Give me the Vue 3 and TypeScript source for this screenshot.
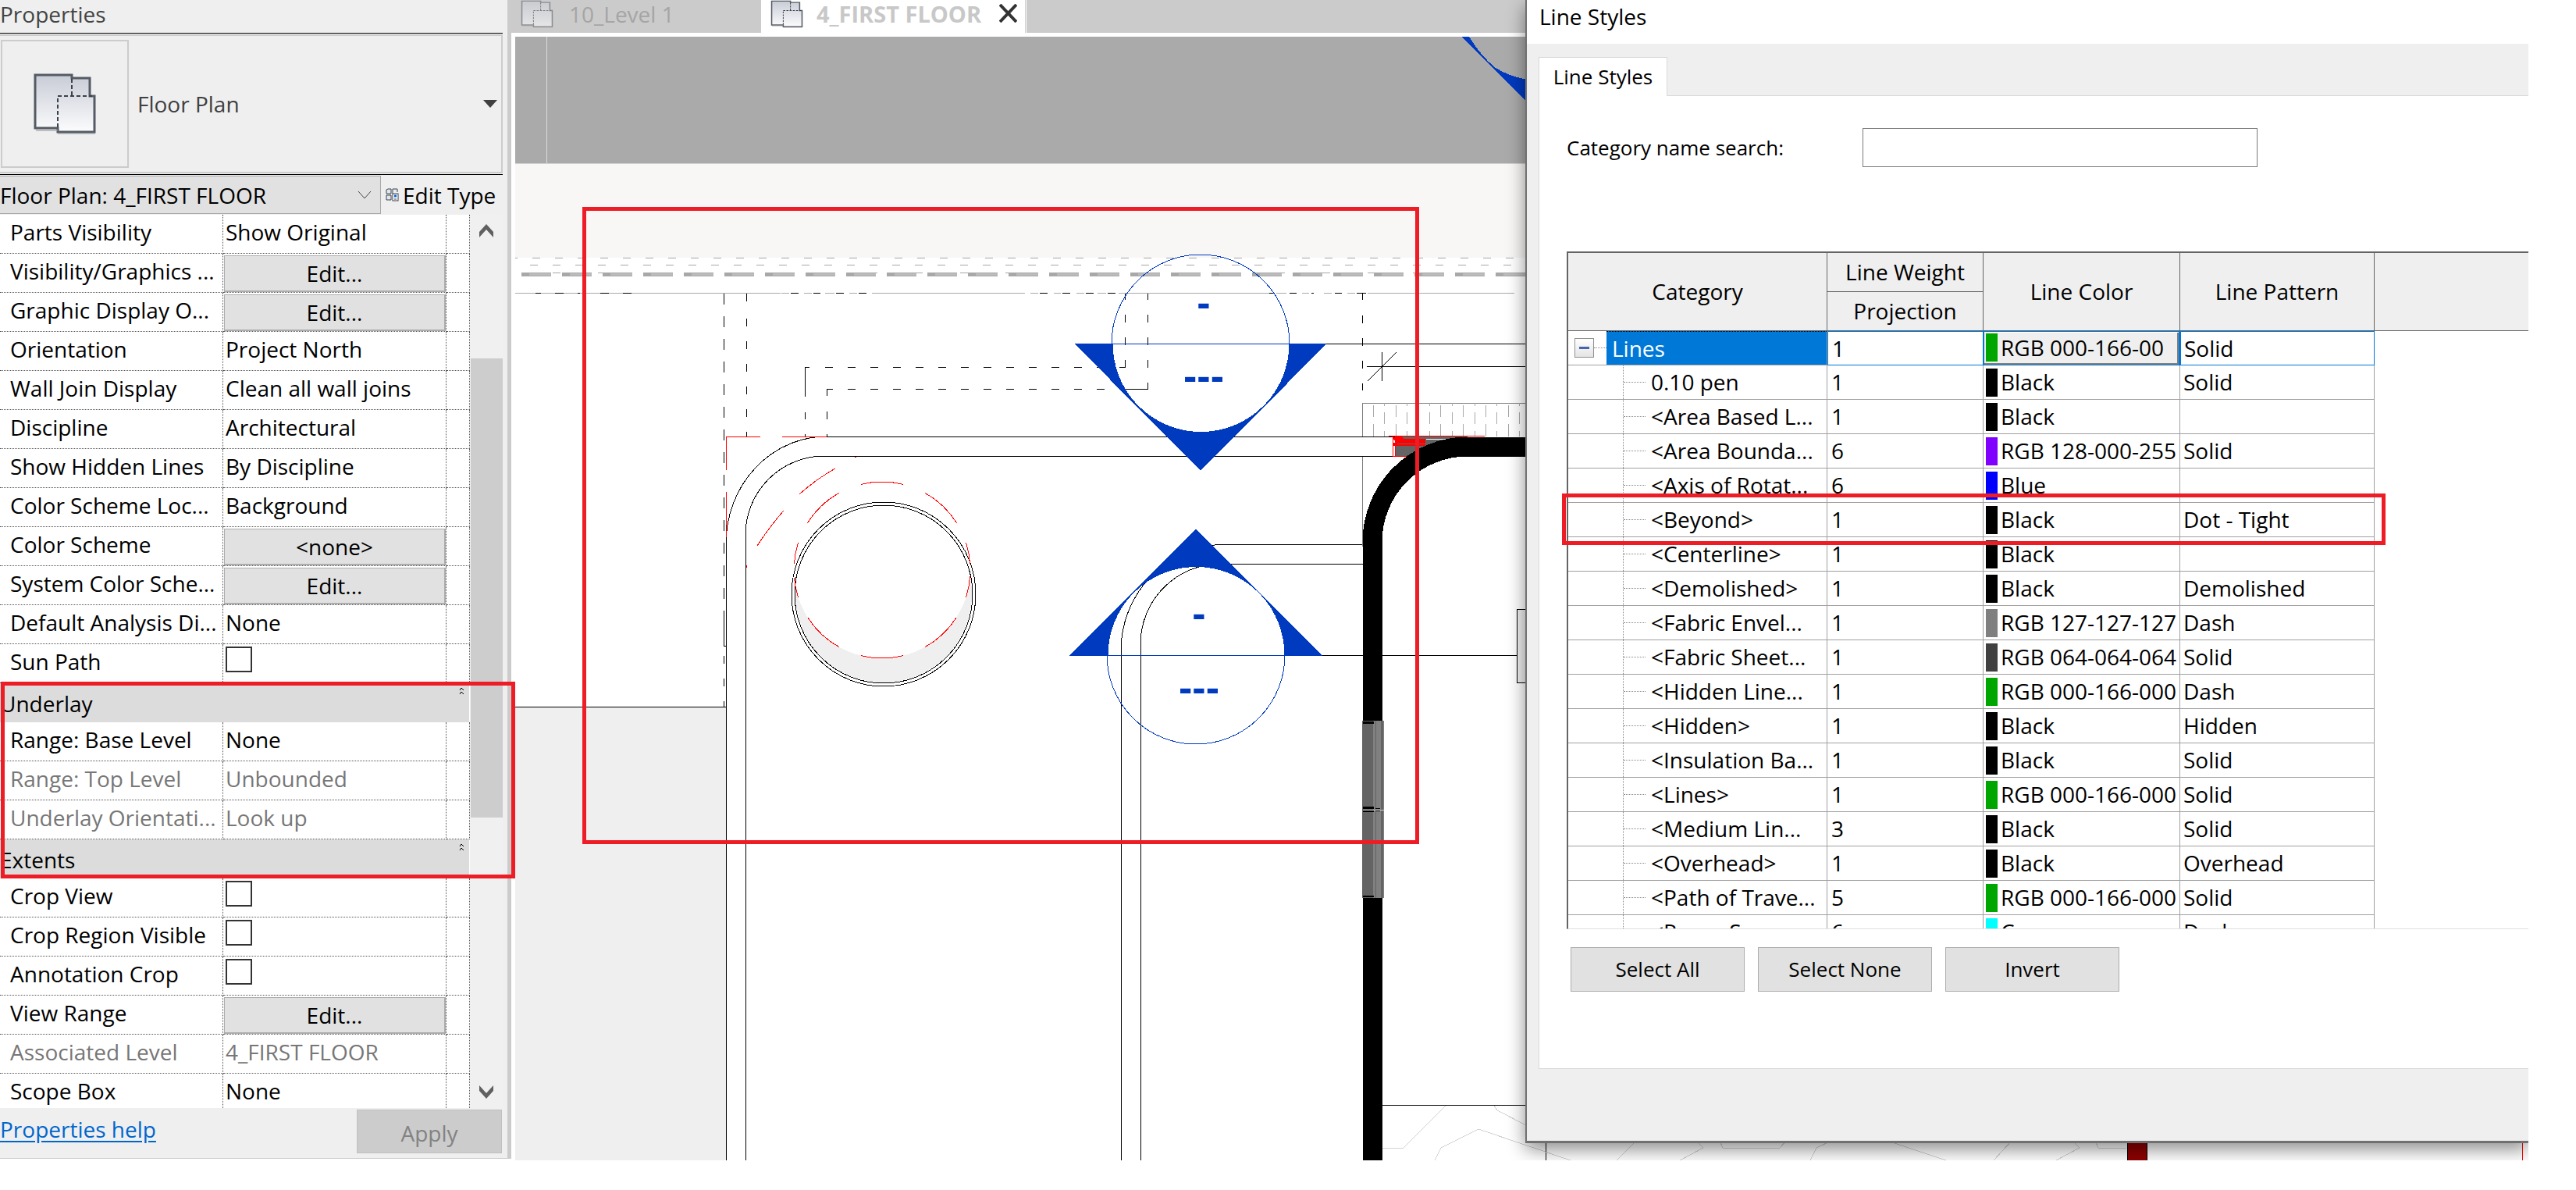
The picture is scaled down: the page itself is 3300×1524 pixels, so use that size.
<script setup lang="ts">
import { ref } from 'vue'

type Kind = 'text' | 'button' | 'check' | 'group'
interface Prop { label: string; kind: Kind; value?: string; muted?: boolean }

const props: Prop[] = [
  { label: 'Parts Visibility', kind: 'text', value: 'Show Original' },
  { label: 'Visibility/Graphics ...', kind: 'button', value: 'Edit...' },
  { label: 'Graphic Display O...', kind: 'button', value: 'Edit...' },
  { label: 'Orientation', kind: 'text', value: 'Project North' },
  { label: 'Wall Join Display', kind: 'text', value: 'Clean all wall joins' },
  { label: 'Discipline', kind: 'text', value: 'Architectural' },
  { label: 'Show Hidden Lines', kind: 'text', value: 'By Discipline' },
  { label: 'Color Scheme Loc...', kind: 'text', value: 'Background' },
  { label: 'Color Scheme', kind: 'button', value: '<none>' },
  { label: 'System Color Sche...', kind: 'button', value: 'Edit...' },
  { label: 'Default Analysis Di...', kind: 'text', value: 'None' },
  { label: 'Sun Path', kind: 'check' },
  { label: 'Underlay', kind: 'group' },
  { label: 'Range: Base Level', kind: 'text', value: 'None' },
  { label: 'Range: Top Level', kind: 'text', value: 'Unbounded', muted: true },
  { label: 'Underlay Orientati...', kind: 'text', value: 'Look up', muted: true },
  { label: 'Extents', kind: 'group' },
  { label: 'Crop View', kind: 'check' },
  { label: 'Crop Region Visible', kind: 'check' },
  { label: 'Annotation Crop', kind: 'check' },
  { label: 'View Range', kind: 'button', value: 'Edit...' },
  { label: 'Associated Level', kind: 'text', value: '4_FIRST FLOOR', muted: true },
  { label: 'Scope Box', kind: 'text', value: 'None' },
]

interface LineStyle { name: string; weight: number; hex: string; color: string; pattern: string }
const green = '#00a600'
const styles: LineStyle[] = [
  { name: '0.10 pen', weight: 1, hex: '#000', color: 'Black', pattern: 'Solid' },
  { name: '<Area Based L...', weight: 1, hex: '#000', color: 'Black', pattern: '' },
  { name: '<Area Bounda...', weight: 6, hex: '#8000ff', color: 'RGB 128-000-255', pattern: 'Solid' },
  { name: '<Axis of Rotat...', weight: 6, hex: '#0000ff', color: 'Blue', pattern: '' },
  { name: '<Beyond>', weight: 1, hex: '#000', color: 'Black', pattern: 'Dot - Tight' },
  { name: '<Centerline>', weight: 1, hex: '#000', color: 'Black', pattern: '' },
  { name: '<Demolished>', weight: 1, hex: '#000', color: 'Black', pattern: 'Demolished' },
  { name: '<Fabric Envel...', weight: 1, hex: '#7f7f7f', color: 'RGB 127-127-127', pattern: 'Dash' },
  { name: '<Fabric Sheet...', weight: 1, hex: '#404040', color: 'RGB 064-064-064', pattern: 'Solid' },
  { name: '<Hidden Line...', weight: 1, hex: green, color: 'RGB 000-166-000', pattern: 'Dash' },
  { name: '<Hidden>', weight: 1, hex: '#000', color: 'Black', pattern: 'Hidden' },
  { name: '<Insulation Ba...', weight: 1, hex: '#000', color: 'Black', pattern: 'Solid' },
  { name: '<Lines>', weight: 1, hex: green, color: 'RGB 000-166-000', pattern: 'Solid' },
  { name: '<Medium Lin...', weight: 3, hex: '#000', color: 'Black', pattern: 'Solid' },
  { name: '<Overhead>', weight: 1, hex: '#000', color: 'Black', pattern: 'Overhead' },
  { name: '<Path of Trave...', weight: 5, hex: green, color: 'RGB 000-166-000', pattern: 'Solid' },
  { name: '<Room Sepa...', weight: 6, hex: '#00ffff', color: 'Cyan', pattern: 'Dash' },
]

const search = ref('')
const view = ref('Floor Plan: 4_FIRST FLOOR')

// Horizontal runs of the roof edge, as [start, end] pairs.
const edgeGrey = [[660, 1000], [1001, 1011], [1030, 1040], [1057, 1069], [1088, 1098], [1117, 1313], [1320, 1330], [1350, 1359], [1379, 1389], [1406, 1417], [1433, 1626], [1635, 1648], [1668, 1677], [1696, 1706], [1726, 1736], [1752, 1940]]
const edgeBlack = [[686, 693], [711, 722], [740, 743], [769, 780], [798, 809], [1013, 1023], [1042, 1051], [1071, 1081], [1100, 1110], [1332, 1342], [1361, 1371], [1391, 1401], [1419, 1429], [1626, 1632], [1652, 1661], [1680, 1683], [1710, 1719], [1738, 1750]]
const runs = (pairs: number[][], y: number) => pairs.map(([a, b]) => `M${a} ${y}H${b}`).join('')

// Arc of the hidden circle between two bearings, measured clockwise from north.
const arc = (cx: number, cy: number, r: number, from: number, to: number) => {
  const at = (deg: number) => {
    const t = (deg * Math.PI) / 180
    return `${(cx + r * Math.sin(t)).toFixed(1)} ${(cy - r * Math.cos(t)).toFixed(1)}`
  }
  return `M${at(from)}A${r} ${r} 0 0 1 ${at(to)}`
}
const hiddenArcs = [[-14, 14], [29, 58], [72, 86], [94, 108], [123, 151], [166, 194], [209, 237], [252, 265], [274, 288], [302, 331]]
  .map(([a, b]) => arc(1130, 730, 113, a, b)).join('')

const paverXs = Array.from({ length: 15 }, (_, i) => 1759 + Math.round(i * 14.4))
const pavers = paverXs.map((x, i) => i % 2 === 0 ? `M${x} 519V534M${x} 543V559` : `M${x} 516V520M${x} 528V543M${x} 552V559`).join('')

const contours = 'M1771 1470H1798L1852 1416M1914 1416L1918 1422L1955 1441M1838 1486L1846 1470L1894 1446L2012 1486M2096 1461L2071 1486M2173 1461L2182 1470L2152 1486M2203 1461L2207 1470H2280L2288 1461M2346 1461L2327 1470L2319 1486M2418 1461L2493 1486M2577 1461L2554 1486M2655 1461L2664 1470L2634 1486M2684 1461L2688 1470H2724'
</script>

<template>
  <div class="shell">
    <svg class="defs" aria-hidden="true">
      <defs>
        <linearGradient id="sheet" x1="0" y1="0" x2="0" y2="1">
          <stop offset="0" stop-color="#c8ccd6" /><stop offset="1" stop-color="#fcfcfd" />
        </linearGradient>
        <symbol id="plan" viewBox="0 0 82 80" preserveAspectRatio="none">
          <path d="M3 3H50V7H73V30H79V76H32V71H3Z" fill="url(#sheet)" stroke="#555b64" stroke-width="3" />
          <path d="M4 74H32M32 78H80" stroke="#9a9da2" stroke-width="2" opacity=".6" />
          <path d="M50 8V30M32 70V30H76" fill="none" stroke="#3c424c" stroke-width="2" stroke-dasharray="5 3" />
        </symbol>
      </defs>
    </svg>

    <aside class="panel">
      <h2 class="panel-title">Properties</h2>
      <div class="type-row">
        <button class="type" type="button">
          <span class="thumb-box"><svg width="82" height="80"><use href="#plan" /></svg></span>
          <span class="type-name">Floor Plan</span>
          <svg class="caret" width="18" height="10"><path d="M0 0H18L9 10Z" fill="#404040" /></svg>
        </button>
      </div>
      <div class="view-row">
        <div class="view-pick">
          <select v-model="view" aria-label="View"><option>Floor Plan: 4_FIRST FLOOR</option></select>
          <svg class="pick-arrow" width="18" height="11"><path d="M1 1L9 10L17 1" fill="none" stroke="#444" /></svg>
        </div>
        <button class="edit-type" type="button">
          <svg width="17" height="17" viewBox="0 0 17 17">
            <path d="M1 2L3 1H7V7H1ZM9 1H15V5M9 1V7M1 9H7V15H1Z" fill="#e4e8ee" stroke="#39424e" />
            <rect x="9" y="7" width="7" height="9" fill="#fff" stroke="#39424e" />
            <path d="M11 10H14" stroke="#0a62c8" stroke-width="3" /><path d="M11 14H14" stroke="#39424e" />
          </svg>
          <span>Edit Type</span>
        </button>
      </div>
      <div class="grid-area">
        <table class="grid">
          <colgroup><col class="c-label"><col class="c-value"><col class="c-end"></colgroup>
          <tbody>
            <tr v-for="(p, i) in props" :key="p.label" :class="{ muted: p.muted, group: p.kind === 'group' }">
              <template v-if="p.kind === 'group'">
                <th colspan="3" scope="rowgroup">
                  <div class="group-head">
                    <span>{{ p.label }}</span>
                    <button type="button" :aria-label="'Collapse ' + p.label">
                      <svg width="7" height="10"><path d="M1 4L3 1L6 4M1 9L3 6L6 9" fill="none" stroke="#000" /></svg>
                    </button>
                  </div>
                </th>
              </template>
              <template v-else>
                <th scope="row"><label :for="p.kind === 'check' ? 'p' + i : undefined">{{ p.label }}</label></th>
                <td :class="p.kind">
                  <button v-if="p.kind === 'button'" type="button" class="cell-btn" :aria-label="p.label + ' ' + p.value">{{ p.value }}</button>
                  <input v-else-if="p.kind === 'check'" :id="'p' + i" type="checkbox" class="box">
                  <template v-else>{{ p.value }}</template>
                </td>
                <td></td>
              </template>
            </tr>
          </tbody>
        </table>
        <div class="scroll">
          <svg width="18" height="17"><path d="M0 10L9 0L18 10V17L9 7L0 17Z" fill="#606060" /></svg>
          <div class="thumb"></div>
          <svg width="18" height="17"><path d="M0 7L9 17L18 7V0L9 10L0 0Z" fill="#606060" /></svg>
        </div>
      </div>
      <div class="panel-foot">
        <a href="#help">Properties help</a>
        <button type="button" disabled>Apply</button>
      </div>
    </aside>

    <main class="work">
      <nav class="tabs">
        <button class="tab" type="button">
          <svg width="42" height="36"><use href="#plan" /></svg><span>10_Level 1</span>
        </button>
        <div class="tab active">
          <button class="tab-name" type="button"><svg width="42" height="36"><use href="#plan" /></svg><span>4_FIRST FLOOR</span></button>
          <button class="close" type="button" aria-label="Close view">
            <svg width="23" height="24"><path d="M1 1L22 23M22 1L1 23" stroke="#333" stroke-width="4" /></svg>
          </button>
        </div>
      </nav>
      <div class="canvas">
        <svg class="drawing" role="img" aria-label="First floor plan">
          <g transform="translate(-660 -47)" shape-rendering="crispEdges" fill="none" stroke="#000">
            <g stroke="none">
              <rect x="660" y="47" width="2640" height="162" fill="#aaa" />
              <rect x="660" y="209" width="2640" height="1" fill="#d2d2d0" />
              <rect x="660" y="210" width="2640" height="120" fill="#f8f7f5" />
              <rect x="660" y="905" width="270" height="600" fill="#efefef" />
              <rect x="700" y="47" width="1" height="162" fill="#dcdcdc" />
            </g>
            <path d="M1872 47L1956 130V102Q1932 97 1916 87Q1898 73 1882 47Z" fill="#003abf" stroke="none" />

            <g stroke="#a8a8a8">
              <path d="M653 330H1955" stroke-dasharray="10 19" />
              <path d="M679 339H1955" stroke-dasharray="10 19" />
              <path d="M708 349H1955" stroke-dasharray="10 48" />
              <path d="M668 351H1955" stroke-width="5" stroke-dasharray="38 14" />
              <path d="M678 351H1955" stroke="#bcbcbc" stroke-width="3" stroke-dasharray="28 24" />
              <path :d="runs(edgeGrey, 375)" />
            </g>
            <path :d="runs(edgeBlack, 375)" />

            <path d="M927 376V790" stroke-dasharray="14 15" />
            <path d="M927 782V827H930M927 840V850M927 869V879M927 898V905" />
            <path d="M956 376V389M956 408V559" stroke-dasharray="10 19" />
            <path d="M1031 508V470H1037M1031 528V537M1031 556V559M1059 507V498H1067M1059 527V537M1059 556V559" />
            <path d="M1057 470H1441" stroke-dasharray="10 19" />
            <path d="M1086 498H1430" stroke-dasharray="10 19" />
            <path d="M1434 470H1441V461M1441 376V384M1441 403V413M1441 432V442M1441 498H1470V490M1470 376V384M1470 403V413M1470 432V442M1470 461V471" />
            <path d="M1745 376V384M1745 404V414M1745 433V443M1745 462V472M1745 491V500" />

            <path d="M660 905H930M930 1486V696A129 137 0 0 1 1059 559H1800M955 1486V685A101 101 0 0 1 1056 584H1800" />
            <circle cx="1132" cy="761" r="113" fill="#efefef" stroke="none" />
            <circle cx="1130" cy="730" r="113" fill="#fff" stroke="none" />
            <circle cx="1132" cy="761" r="118" />
            <circle cx="1132" cy="761" r="114" />
            <g stroke="#f00">
              <path :d="hiddenArcs" />
              <path d="M930 602V559H974M1002 559H1059M930 630V688M970 699Q987 673 1004 654M1024 633Q1045 614 1070 600M1095 585H1097M956 724V727" />
            </g>

            <path d="M1436 1486V833A136 136 0 0 1 1572 697H1746M1461 1486V825A103 103 0 0 1 1564 722H1746" />
            <path d="M1699 440H1956M1692 839H1956M1751 469H1956M1770 451V488M1752 488L1789 451" />
            <rect x="1943" y="780" width="40" height="94" fill="#efefef" />

            <path d="M1745 559V516H1956M1745 585V700" stroke="#808080" />
            <path :d="pavers" stroke="#a8a8a8" />
            <path d="M1787 559H1880V584H1787Z" fill="#646464" stroke="none" />
            <path d="M1779 558H1902M1784 558V584H1806M1787 571V584" stroke="#f00" />
            <path d="M1784 560L1794 558L1798 562H1826V571H1784V567H1788Z" fill="#f00" stroke="none" />
            <path d="M1827 562H1860" stroke="#fff" />
            <path d="M1790 568H1826" stroke="#646464" />
            <path d="M1758 1486V694A122 122 0 0 1 1880 572H1956" stroke-width="25" />
            <g stroke="none">
              <rect x="1745" y="923" width="28" height="227" fill="#646464" />
              <rect x="1759" y="923" width="10" height="227" fill="#808080" />
              <rect x="1762" y="923" width="1" height="227" fill="#646464" />
              <rect x="1772" y="923" width="1" height="227" fill="#808080" />
              <path d="M1746 924H1760V927H1746ZM1746 1033H1760V1036H1746ZM1746 1038H1760V1040H1746ZM1746 1147H1760V1149H1746ZM1762 1035H1768V1036H1762ZM1762 1038H1768V1039H1762Z" fill="#000" />
              <path d="M1746 1037H1773V1038H1746Z" fill="#ccc" />
            </g>
            <path d="M1770 1415H1956M1980 1461V1486" />
            <path :d="contours" stroke="#d2d2d2" />
            <rect x="2725" y="1455" width="25" height="40" fill="#8f0000" />
            <path d="M3231 1455V1486" stroke="#f00" />

            <g stroke="#003abf">
              <circle cx="1538" cy="440" r="114" />
              <path d="M1377 440H1699L1538 602ZM1425 440A113 113 0 0 0 1652 440Z" fill="#003abf" fill-rule="evenodd" />
              <circle cx="1532" cy="839" r="114" />
              <path d="M1371 839H1693L1532 678ZM1419 839A113 113 0 0 1 1646 839Z" fill="#003abf" fill-rule="evenodd" />
            </g>
            <g class="tag" fill="#003abf" stroke="none" text-anchor="middle">
              <text x="1542" y="405">-</text><text x="1542" y="499">---</text>
              <text x="1536" y="803">-</text><text x="1536" y="898">---</text>
            </g>
          </g>
        </svg>
      </div>

      <section class="dialog" role="dialog" aria-label="Line Styles">
        <h2 class="dialog-title">Line Styles</h2>
        <div class="dialog-body">
          <div class="dialog-tabs"><button type="button">Line Styles</button></div>
          <div class="pane">
            <div class="search">
              <label for="search">Category name search:</label>
              <input id="search" v-model="search" type="text">
            </div>
            <div class="styles-wrap">
              <table class="styles">
                <colgroup><col class="k-name"><col class="k-weight"><col class="k-color"><col class="k-pattern"><col></colgroup>
                <thead>
                  <tr><th rowspan="2">Category</th><th>Line Weight</th><th rowspan="2">Line Color</th><th rowspan="2">Line Pattern</th><th rowspan="2" class="rest"></th></tr>
                  <tr><th>Projection</th></tr>
                </thead>
                <tbody>
                  <tr class="root">
                    <td>
                      <div class="name">
                        <button type="button" class="toggle" aria-label="Collapse Lines"></button><i class="stub"></i>
                        <span class="picked">Lines</span>
                      </div>
                    </td>
                    <td class="num">1</td>
                    <td class="color-cell"><button type="button" class="color-btn"><span class="swatch" :style="{ background: green }"></span>RGB 000-166-00</button></td>
                    <td class="pat">Solid</td>
                    <td class="rest"></td>
                  </tr>
                  <tr v-for="s in styles" :key="s.name">
                    <td><div class="name"><span class="branch"><i></i></span><span>{{ s.name }}</span></div></td>
                    <td class="num">{{ s.weight }}</td>
                    <td><div class="color"><span class="swatch" :style="{ background: s.hex }"></span>{{ s.color }}</div></td>
                    <td class="pat">{{ s.pattern }}</td>
                    <td class="rest"></td>
                  </tr>
                </tbody>
              </table>
            </div>
            <div class="actions">
              <button type="button">Select All</button>
              <button type="button">Select None</button>
              <button type="button">Invert</button>
            </div>
          </div>
        </div>
      </section>
    </main>

    <div class="mark mark-underlay"></div>
    <div class="mark mark-plan"></div>
    <div class="mark mark-beyond"></div>
  </div>
</template>

<style>
body { background: #fff; }
</style>

<style scoped>
.shell {
  position: relative;
  display: flex;
  padding: 0 61px 38px 0;
  overflow: hidden;
  font-family: "Open Sans", "Noto Sans", sans-serif;
  font-size: 28px;
  color: #000;
}
.shell * { box-sizing: border-box; }
.defs { position: absolute; width: 0; height: 0; }
button, select, input { font: inherit; color: inherit; margin: 0; padding: 0; border: 0; border-radius: 0; background: none; }
h2 { margin: 0; font-size: 28px; font-weight: 400; }
svg { display: block; flex: none; }

.panel { flex: none; width: 655px; margin-bottom: 2px; background: #efefef; border-right: 5px solid #cbcbcb; border-bottom: 1px solid #ccc; }
.panel-title { height: 43px; line-height: 36px; color: #444; border-bottom: 1px solid #000; margin-right: 6px; }
.type-row { height: 181px; padding: 1px 0; border-bottom: 1px solid #000; margin-right: 6px; }
.type { display: flex; align-items: center; width: 100%; height: 178px; border: 2px solid #ccc; border-left: 0; padding: 0 5px 0 1px; color: #404040; }
.thumb-box { display: flex; align-items: center; justify-content: center; width: 164px; height: 164px; border: 2px solid #ccc; }
.type-name { padding-left: 11px; }
.caret { margin-left: auto; }
.view-row { display: flex; height: 51px; padding: 1px 0; }
.view-pick { position: relative; width: 488px; }
.view-pick select { appearance: none; width: 100%; height: 49px; background: #e1e1e1; border: 1px solid #a8a8a8; border-left: 0; }
.pick-arrow { position: absolute; right: 12px; top: 19px; pointer-events: none; }
.edit-type { display: flex; align-items: center; gap: 5px; padding-left: 6px; white-space: nowrap; }

.grid-area { display: flex; height: 1144px; overflow: hidden; }
.grid { flex: none; width: 602px; table-layout: fixed; border-spacing: 0; background: #fff; }
.c-label { width: 286px; }
.c-value { width: 286px; }
.c-end { width: 30px; }
.grid th, .grid td { height: 50px; padding: 0 0 0 3px; line-height: 44px; font-weight: 400; text-align: left; vertical-align: top; white-space: nowrap; overflow: hidden; border-right: 1px dotted #555; border-bottom: 1px dotted #555; }
.grid th { padding-left: 13px; }
.grid .group th { padding: 0; background: #dcdcdc; border-right: 1px solid #fff; border-bottom-color: #dcdcdc; line-height: 53px; }
.group-head { display: flex; justify-content: space-between; align-items: flex-start; height: 49px; padding-right: 6px; }
.group-head button { padding-top: 5px; }
.muted { color: #777; }
.grid td.button { padding: 2px 0 0 1px; }
.cell-btn { display: block; width: 284px; height: 47px; line-height: 44px; background: #e1e1e1; border: 1px solid #adadad; border-right-width: 2px; border-bottom-width: 2px; }
.grid td.check { padding: 3px 0 0 3px; }
.box { appearance: none; display: block; width: 34px; height: 33px; border: 2px solid #333; background: #fff; }
.scroll { display: flex; flex-direction: column; align-items: center; width: 42px; padding: 12px 0; background: #f0f0f0; }
.thumb { width: 41px; height: 588px; margin: 155px 0 auto; background: #cdcdcd; }

.panel-foot { display: flex; justify-content: space-between; height: 64px; padding: 2px 7px 0 0; }
.panel-foot a { color: #0066cc; line-height: 50px; text-underline-offset: 4px; }
.panel-foot button { width: 186px; height: 56px; background: #ccc; border: 1px solid #bfbfbf; color: #838383; padding-top: 3px; }

.work { position: relative; flex: 1; min-width: 0; display: flex; flex-direction: column; overflow: hidden; }
.tabs { display: flex; height: 42px; background: #cbcbcb; }
.tab { display: flex; align-items: flex-start; width: 320px; height: 42px; padding-left: 12px; line-height: 36px; color: #a5a5a5; white-space: nowrap; }
.tab > svg { opacity: .55; }
.tab > span { padding-left: 20px; }
.tab.active { width: 341px; background: #fff; color: #c8c8c8; font-size: 29px; font-weight: 700; border-right: 3px double #cbcbcb; }
.tab-name { display: flex; align-items: flex-start; gap: 17px; line-height: 36px; }
.close { margin: 5px 10px 0 auto; }
.canvas { position: relative; flex: 1; margin: 5px 0 0 5px; overflow: hidden; }
.drawing { position: absolute; width: 100%; height: 100%; }
.tag text { font-family: "Liberation Sans", sans-serif; font-weight: 700; font-size: 52px; }

.dialog { position: absolute; top: 0; left: 1299px; right: 0; background: #efefef; border-left: 2px solid #707070; border-bottom: 3px solid #707070; box-shadow: 0 8px 22px rgba(0, 0, 0, .45); }
.dialog-title { height: 56px; padding-left: 16px; line-height: 42px; background: #fff; }
.dialog-body { padding: 17px 0 92px 15px; font-size: 26px; }
.dialog-tabs { display: flex; height: 50px; }
.dialog-tabs button { position: relative; width: 165px; height: 50px; background: #fff; border: 1px solid #d9d9d9; border-bottom: 0; padding-bottom: 2px; white-space: nowrap; }
.pane { margin-top: -1px; padding: 41px 0 98px 35px; background: #fff; border: 1px solid #d9d9d9; border-right: 0; }
.search { display: flex; align-items: center; height: 50px; }
.search label { width: 379px; padding-bottom: 1px; }
.search input { width: 506px; height: 50px; border: 1px solid #7a7a7a; background: #fff; padding: 0 8px; }
.styles-wrap { height: 868px; margin-top: 108px; overflow: hidden; border: solid #646464; border-width: 2px 0 1px 2px; border-bottom-color: #e0e0e0; }
.styles { width: 100%; table-layout: fixed; border-spacing: 0; font-size: 28px; }
.k-name { width: 332px; }
.k-weight { width: 200px; }
.k-color { width: 252px; }
.k-pattern { width: 249px; }
.styles th { height: 50px; padding: 0; font-weight: 400; line-height: 49px; background: #efefef; border-right: 1px solid #646464; border-bottom: 1px solid #646464; }
.styles th.rest { border-right: 0; }
.styles td { height: 44px; padding: 0; line-height: 43px; white-space: nowrap; overflow: hidden; border-right: 1px solid #a0a0a0; border-bottom: 1px solid #a0a0a0; }
.styles td.rest { border: 0; }
.styles td.num { padding-left: 5px; }
.styles td.pat { padding-left: 4px; }
.name { display: flex; align-items: center; height: 43px; }
.branch { display: flex; align-items: center; width: 29px; height: 43px; margin: 0 7px 0 70px; border-left: 1px dotted #888; }
.branch i { width: 100%; border-top: 1px dotted #888; }
.toggle { width: 25px; height: 25px; margin-left: 8px; border: 1px solid #919191; background: linear-gradient(#4a63ad, #4a63ad) center / 13px 3px no-repeat, linear-gradient(#fff, #e4e4e4); }
.stub { width: 16px; border-top: 1px dotted #888; }
.picked { flex: 1; height: 43px; padding-left: 7px; color: #fff; background: #0078d7; border-top: 1px dotted #000; line-height: 42px; }
.color { display: flex; align-items: center; height: 43px; padding-left: 3px; overflow: hidden; }
.swatch { flex: none; width: 15px; height: 36px; margin-right: 4px; }
.root .num, .root .pat { border: 1px solid #0078d7; line-height: 41px; }
.root .color-cell { border: solid #0078d7; border-width: 1px 2px 1px 1px; }
.color-btn { display: flex; align-items: center; width: 249px; height: 41px; padding-left: 2px; background: #efefef; border: solid #808080; border-width: 0 2px 2px 0; white-space: nowrap; }
.actions { display: flex; gap: 17px; margin: 23px 0 0 5px; }
.actions button { width: 223px; height: 57px; padding-bottom: 2px; background: #e1e1e1; border: 1px solid #adadad; }

.mark { position: absolute; border: 5px solid #ee1c24; pointer-events: none; }
.mark-underlay { left: 1px; top: 873px; width: 659px; height: 252px; }
.mark-plan { left: 746px; top: 265px; width: 1072px; height: 816px; }
.mark-beyond { left: 2001px; top: 632px; width: 1055px; height: 66px; }
</style>
